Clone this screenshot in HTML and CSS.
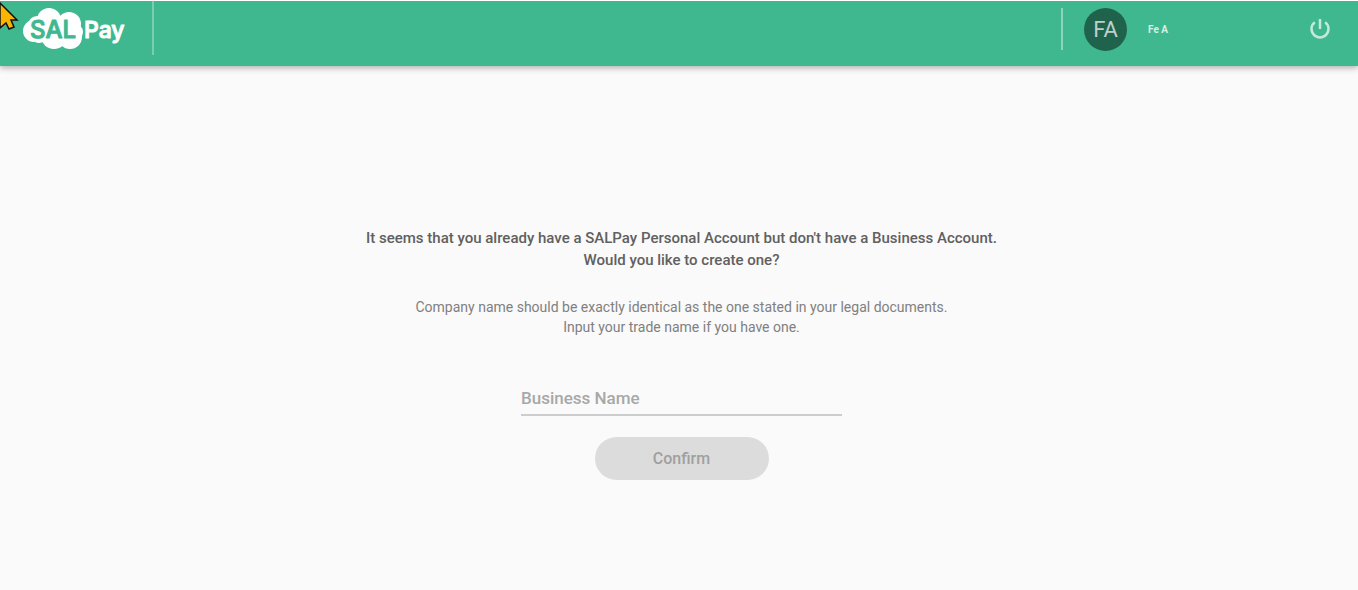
FILE: index.html
```html
<!DOCTYPE html>
<html lang="en">
<head>
<meta charset="utf-8">
<meta name="viewport" content="width=device-width, initial-scale=1">
<title>SALPay Business Account</title>
<link rel="stylesheet" href="styles.css">
</head>
<body>
<header class="topbar">
  <a class="brand" href="#" aria-label="SALPay home">
    <svg class="logo" viewBox="0 0 104 44" aria-hidden="true">
      <g fill="#fff">
        <circle cx="11" cy="24" r="11"/>
        <circle cx="14" cy="18" r="9"/>
        <circle cx="26" cy="13" r="12"/>
        <circle cx="46" cy="17" r="12"/>
        <circle cx="51" cy="25" r="9"/>
        <circle cx="47" cy="30" r="12"/>
        <circle cx="31" cy="29" r="13"/>
        <circle cx="16" cy="28" r="8"/>
      </g>
      <text class="logo-sal" x="7" y="31">SAL</text>
      <text class="logo-pay" x="61" y="31">Pay</text>
    </svg>
  </a>
  <div class="user">
    <span class="avatar">FA</span>
    <span class="user-name">Fe A</span>
    <button class="power" type="button" aria-label="Log out">
      <svg viewBox="0 0 24 24" aria-hidden="true"><path d="M12 2V12M17.200 5.200A8.500 8.500 0 1 1 6.800 5.200"/></svg>
    </button>
  </div>
</header>
<main class="content">
  <p class="lead">It seems that you already have a SALPay Personal Account but don't have a Business Account.<br>Would you like to create one?</p>
  <p class="note">Company name should be exactly identical as the one stated in your legal documents.<br>Input your trade name if you have one.</p>
  <form class="form">
    <input class="field" type="text" aria-label="Business Name" placeholder="Business Name">
    <button class="confirm" type="submit" disabled>Confirm</button>
  </form>
</main>
<svg class="pointer" viewBox="0 0 20 32" aria-hidden="true"><path d="M0 3 17 20H11L14 27 9 29 6 23 0 28Z"/></svg>
</body>
</html>
```

FILE: styles.css
```css
* { box-sizing: border-box; }

body {
  margin: 0;
  min-height: 100vh;
  background: #fafafa;
  color: #606060;
  font-family: Roboto, "Liberation Sans", sans-serif;
}

.topbar {
  display: flex;
  justify-content: space-between;
  height: 66px;
  border-top: 1px solid #fff;
  background: #40b88f;
  box-shadow: 0 2px 6px rgba(0, 0, 0, 0.3);
}

.brand {
  height: 54px;
  padding: 6px 25px 0 23px;
  border-right: 2px solid #79cdb1;
}

.logo {
  display: block;
  width: 104px;
  height: 44px;
}

.logo-sal,
.logo-pay {
  font-family: Inter, sans-serif;
  font-weight: 500;
  stroke-linejoin: round;
  stroke-width: 1;
}

.logo-sal {
  font-size: 24px;
  fill: #40b88f;
  stroke: #40b88f;
}

.logo-pay {
  font-size: 23px;
  fill: #fff;
  stroke: #fff;
}

.user {
  display: flex;
  align-items: center;
  align-self: flex-start;
  width: 297px;
  height: 42px;
  margin-top: 7px;
  padding: 0 26px 0 21px;
  border-left: 2px solid #8fd5bd;
}

.avatar {
  display: grid;
  place-items: center;
  width: 43px;
  height: 43px;
  border-radius: 50%;
  background: #20634d;
  color: #bdd0c9;
  font-size: 22px;
  font-weight: 400;
}

.user-name {
  margin-left: 21px;
  color: #d6f0e6;
  font-size: 10px;
  font-weight: 700;
}

.power {
  width: 24px;
  height: 24px;
  margin-left: auto;
  padding: 0;
  border: 0;
  background: none;
}

.power svg {
  display: block;
  fill: none;
  stroke: #c3e9db;
  stroke-width: 2.5;
}

.content {
  display: flex;
  flex-direction: column;
  align-items: center;
  padding: 161px 0 24px 5px;
  text-align: center;
}

.lead {
  margin: 0;
  font-size: 15px;
  font-weight: 500;
  line-height: 22px;
}

.note {
  margin: 26px 0 0;
  color: #808080;
  font-size: 14px;
  font-weight: 400;
  line-height: 20px;
}

.form {
  display: flex;
  flex-direction: column;
  align-items: center;
  gap: 21px;
  width: 321px;
  max-width: 100%;
  margin-top: 44px;
}

.field {
  width: 100%;
  height: 35px;
  padding: 0;
  border: 0;
  border-bottom: 2px solid #cdcdcd;
  border-radius: 0;
  background: none;
  color: #606060;
  font: 500 17px Roboto, "Liberation Sans", sans-serif;
}

.field::placeholder {
  color: #a8a8a8;
  opacity: 1;
}

.confirm {
  width: 174px;
  height: 43px;
  padding: 0;
  border: 0;
  border-radius: 22px;
  background: #dcdcdc;
  color: #a0a0a0;
  font: 500 16px Roboto, "Liberation Sans", sans-serif;
}

.pointer {
  position: absolute;
  top: 0;
  left: 0;
  width: 20px;
  height: 32px;
  fill: #fbb500;
  stroke: #111;
  stroke-width: 1.5;
}
```
